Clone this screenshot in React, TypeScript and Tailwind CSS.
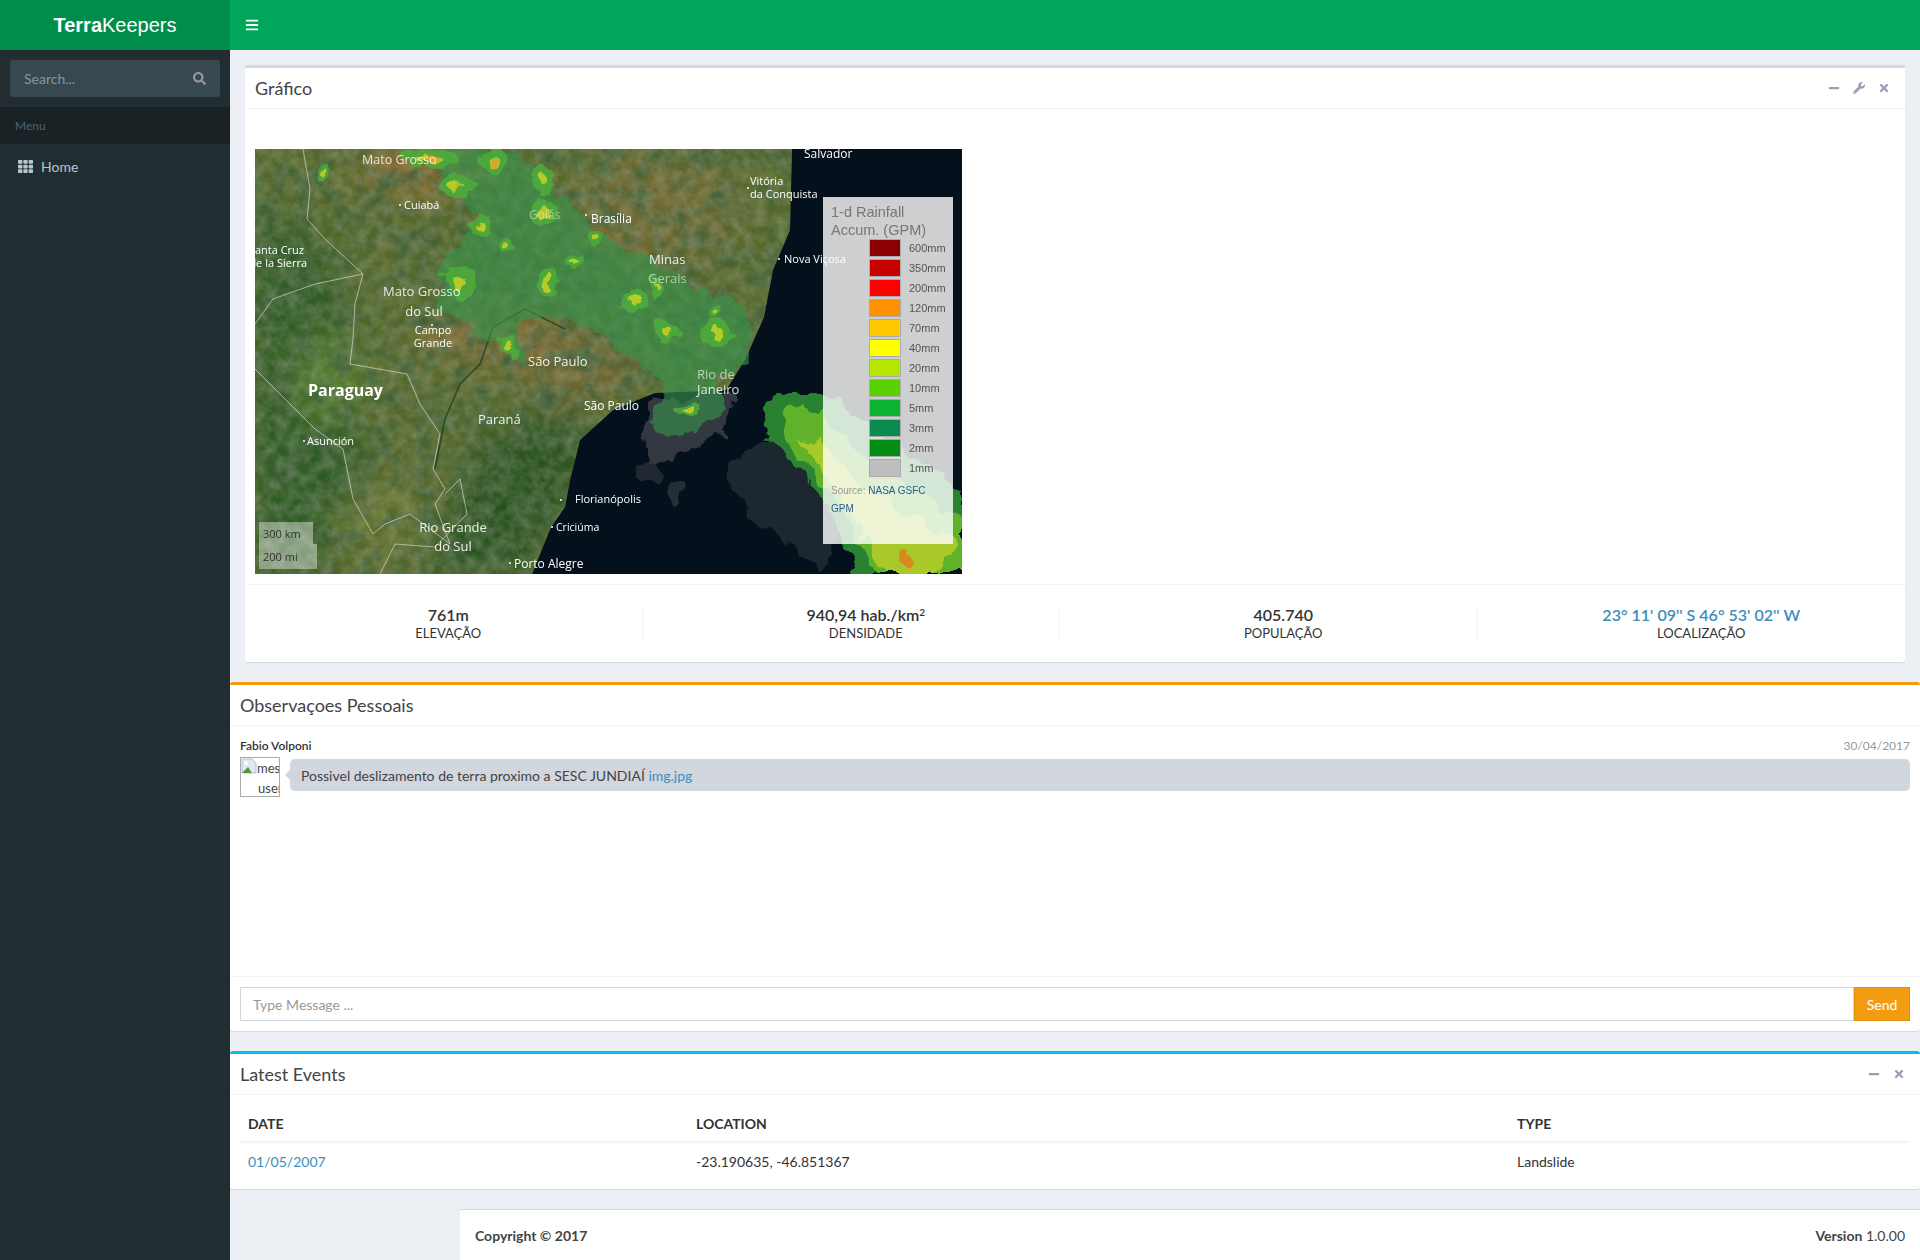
import { FaBars, FaMinus, FaSearch, FaTh, FaTimes, FaWrench } from "react-icons/fa";

const legendRows = [
    { label: "600mm", color: "bg-[#8b0000]" },
    { label: "350mm", color: "bg-[#c80000]" },
    { label: "200mm", color: "bg-[#ff0000]" },
    { label: "120mm", color: "bg-[#ff9000]" },
    { label: "70mm", color: "bg-[#ffc800]" },
    { label: "40mm", color: "bg-[#ffff00]" },
    { label: "20mm", color: "bg-[#b4e600]" },
    { label: "10mm", color: "bg-[#5ad200]" },
    { label: "5mm", color: "bg-[#0cb432]" },
    { label: "3mm", color: "bg-[#0a8c50]" },
    { label: "2mm", color: "bg-[#058c14]" },
    { label: "1mm", color: "bg-[#bebebe]" },
];

const mapLabels = [
    { t: "Mato Grosso", x: 107, y: 15, s: 12.5, o: 0.8 },
    { t: "Cuiabá", x: 149, y: 60, s: 11, o: 1 },
    { t: "Salvador", x: 549, y: 9, s: 12, o: 1 },
    { t: "Vitória", x: 495, y: 36, s: 11, o: 1 },
    { t: "da Conquista", x: 495, y: 49, s: 11, o: 1 },
    { t: "Goiás", x: 274, y: 70, s: 12, o: 0.45 },
    { t: "Brasília", x: 336, y: 74, s: 12, o: 1 },
    { t: "Santa Cruz", x: 49, y: 105, s: 11, o: 1, a: "end" },
    { t: "de la Sierra", x: 52, y: 118, s: 11, o: 1, a: "end" },
    { t: "Minas", x: 394, y: 115, s: 13, o: 0.9 },
    { t: "Gerais", x: 393, y: 134, s: 13, o: 0.55 },
    { t: "Nova Viçosa", x: 529, y: 114, s: 11, o: 1 },
    { t: "Mato Grosso", x: 128, y: 147, s: 13, o: 0.85 },
    { t: "do Sul", x: 169, y: 167, s: 13, o: 0.9, a: "middle" },
    { t: "Campo", x: 178, y: 185, s: 11, o: 1, a: "middle" },
    { t: "Grande", x: 178, y: 198, s: 11, o: 1, a: "middle" },
    { t: "São Paulo", x: 273, y: 217, s: 13, o: 0.9 },
    { t: "Rio de", x: 442, y: 230, s: 13, o: 0.6 },
    { t: "Janeiro", x: 442, y: 245, s: 13, o: 0.85 },
    { t: "Paraguay", x: 53, y: 247, s: 16, o: 1, b: true },
    { t: "São Paulo", x: 329, y: 261, s: 12, o: 1 },
    { t: "Paraná", x: 223, y: 275, s: 13, o: 0.9 },
    { t: "Asunción", x: 52, y: 296, s: 11, o: 1 },
    { t: "Florianópolis", x: 320, y: 354, s: 11, o: 1 },
    { t: "Rio Grande", x: 198, y: 383, s: 13, o: 0.9, a: "middle" },
    { t: "do Sul", x: 198, y: 402, s: 13, o: 0.9, a: "middle" },
    { t: "Criciúma", x: 301, y: 382, s: 10.5, o: 1 },
    { t: "Porto Alegre", x: 259, y: 419, s: 12, o: 1 },
];

const mapDots = [
    [145, 56], [331, 66], [524, 110], [306, 351], [297, 378], [255, 414], [493, 39], [177, 176], [49, 292],
];

// green cells with a brighter core, map coordinates
const rainCells = [
    [174, 9, 26, 10], [240, 11, 14, 14], [202, 38, 14, 14], [287, 31, 13, 16], [70, 23, 7, 8],
    [226, 78, 12, 10], [287, 64, 14, 14], [256, 96, 10, 6], [341, 89, 8, 8], [320, 113, 10, 9],
    [292, 134, 13, 10], [204, 134, 16, 16], [400, 138, 8, 10], [377, 151, 11, 10], [410, 181, 12, 8],
    [462, 184, 15, 14], [457, 161, 8, 8], [254, 197, 9, 10], [433, 258, 16, 7],
];

const coast = "537,0 535,81 518,121 509,168 490,211 471,241 400,244 358,261 325,291 315,331 310,358 296,378 277,425";

const RainfallMap = () => (
    <div className="relative w-[707px] h-[425px] overflow-hidden">
        <svg viewBox="0 0 707 425" className="block w-[707px] h-[425px]">
            <defs>
                <filter id="soft" x="-20%" y="-20%" width="140%" height="140%">
                    <feGaussianBlur stdDeviation="16" />
                </filter>
                <filter id="grain" x="0" y="0" width="100%" height="100%">
                    <feTurbulence type="fractalNoise" baseFrequency="0.09" numOctaves="5" seed="7" />
                    <feColorMatrix values="0 0 0 0 0.5  0 0 0 0 0.5  0 0 0 0 0.4  1.6 0 0 0 -0.45" />
                </filter>
                <filter id="dark" x="0" y="0" width="100%" height="100%">
                    <feTurbulence type="fractalNoise" baseFrequency="0.05" numOctaves="4" seed="3" />
                    <feColorMatrix values="0 0 0 0 0.05  0 0 0 0 0.12  0 0 0 0 0.04  0 2.2 0 0 -0.85" />
                </filter>
                <filter id="edge" x="0" y="0" width="100%" height="100%" filterUnits="objectBoundingBox">
                    <feTurbulence type="fractalNoise" baseFrequency="0.045" numOctaves="3" seed="11" />
                    <feDisplacementMap in="SourceGraphic" scale="22" xChannelSelector="R" yChannelSelector="G" />
                </filter>
                <clipPath id="land">
                    <polygon points={`0,0 ${coast} 0,425`} />
                </clipPath>
            </defs>

            {/* land */}
            <rect width="707" height="425" fill="#05101d" />
            <g clipPath="url(#land)">
                <rect width="707" height="425" fill="#56692c" />
                <g filter="url(#soft)">
                    <polygon points="0,60 70,90 100,240 110,330 60,425 0,425" fill="#2b5a22" />
                    <polygon points="240,280 320,260 330,330 270,425 170,425 200,340" fill="#28511f" />
                    <ellipse cx="170" cy="20" rx="70" ry="25" fill="#8b6a32" />
                    <ellipse cx="400" cy="60" rx="90" ry="55" fill="#6f6a30" />
                    <ellipse cx="240" cy="190" rx="80" ry="30" fill="#7f6a30" />
                    <ellipse cx="330" cy="220" rx="60" ry="30" fill="#6f6630" />
                    <ellipse cx="130" cy="370" rx="50" ry="35" fill="#66752f" />
                    <ellipse cx="70" cy="230" rx="35" ry="45" fill="#4d7a2c" />
                </g>
                <rect width="707" height="425" filter="url(#dark)" />
                <rect width="707" height="425" filter="url(#grain)" opacity="0.35" />
            </g>

            {/* borders and rivers */}
            <g fill="none" stroke="#e8e8e0" strokeWidth="0.8" opacity="0.75">
                <polyline points="48,0 55,40 52,70 70,90 108,125 100,155 98,190 95,215 152,225 165,255 185,285 178,320 190,340 180,355 195,395 155,365 130,375 118,385 98,350 88,300 60,280 0,220" />
                <polyline points="108,125 60,135 18,150 0,175" />
                <polyline points="190,345 205,330 212,365 180,398 140,395 125,425" />
            </g>
            <g fill="none" stroke="#23401f" strokeWidth="1.6" opacity="0.8">
                <polyline points="238,178 225,215 205,235 190,270 180,320" />
                <polyline points="238,178 270,160 310,180" />
            </g>

            {/* cloud shadow on the sea */}
            <g filter="url(#edge)" fill="#3c4148" opacity="0.85">
                <polygon points="395,250 480,240 470,285 440,300 395,320 385,280" />
                <polygon points="510,290 590,340 570,425 510,380 470,330 495,300" opacity="0.55" />
                <ellipse cx="395" cy="325" rx="14" ry="8" opacity="0.6" />
                <ellipse cx="420" cy="345" rx="6" ry="14" opacity="0.7" />
            </g>

            {/* rain accumulation */}
            <g filter="url(#edge)">
                <polygon points="180,0 262,0 300,40 352,90 430,130 492,160 497,210 462,235 472,262 430,288 392,272 410,240 380,210 320,172 262,172 272,218 240,192 180,160 190,110 230,70 190,40" fill="#36934a" opacity="0.62" />
                <polygon points="518,245 565,245 622,281 707,340 707,425 598,425 570,348 504,281" fill="#2c8f35" opacity="0.9" />
                <polygon points="530,262 562,262 612,310 707,370 707,425 622,425 584,350 525,290" fill="#62b42c" opacity="0.95" />
                <polygon points="545,290 565,292 610,340 700,392 680,425 630,425 595,360" fill="#a9c92c" />
                <g fill="#4ead3a" opacity="0.85">
                    {rainCells.map(([cx, cy, rx, ry]) => (
                        <ellipse key={`${cx}-${cy}`} cx={cx} cy={cy} rx={rx} ry={ry} />
                    ))}
                </g>
                <g fill="#b5cb2b">
                    {rainCells.map(([cx, cy, rx, ry]) => (
                        <ellipse key={`${cx}-${cy}`} cx={cx} cy={cy} rx={rx * 0.42} ry={ry * 0.42} />
                    ))}
                </g>
                <ellipse cx="650" cy="408" rx="8" ry="7" fill="#d98a1e" />
                <ellipse cx="176" cy="9" rx="7" ry="4" fill="#d6a62a" />
                <ellipse cx="240" cy="11" rx="4" ry="5" fill="#d6a62a" />
            </g>

            {/* labels */}
            {mapDots.map(([x, y]) => (
                <circle key={`${x}-${y}`} cx={x} cy={y} r="1" fill="#fff" />
            ))}
            {mapLabels.map((l) => (
                <text
                    key={`${l.t}-${l.y}`}
                    x={l.x}
                    y={l.y}
                    fontSize={l.s}
                    fontWeight={l.b ? 700 : 500}
                    textAnchor={l.a ?? "start"}
                    opacity={l.o}
                    className="fill-white font-['Open_Sans',sans-serif]"
                >
                    {l.t}
                </text>
            ))}
        </svg>

        {/* map scale */}
        <div className="absolute left-[4px] top-[373px] w-[54px] h-[22px] bg-white/40 pl-[4px] text-[11px] leading-[23px] text-[#333] font-['Open_Sans',sans-serif]">300 km</div>
        <div className="absolute left-[4px] top-[395px] w-[58px] h-[25px] bg-white/40 pl-[4px] text-[11px] leading-[26px] text-[#333] font-['Open_Sans',sans-serif]">200 mi</div>

        {/* legend */}
        <div className="absolute left-[568px] top-[48px] w-[130px] h-[347px] bg-white/80 pl-[8px] pt-[6px] font-['Liberation_Sans',sans-serif]">
            <div className="text-[14.5px] leading-[18px] text-[#777]">1-d Rainfall<br />Accum. (GPM)</div>
            <div className="mt-[-1px]">
                {legendRows.map((r) => (
                    <div key={r.label} className="flex items-center h-[20px] pl-[38px]">
                        <span className={`w-[32px] h-[18px] border border-[#aaa] ${r.color}`} />
                        <span className="ml-[8px] text-[11px] text-[#555]">{r.label}</span>
                    </div>
                ))}
            </div>
            <div className="mt-[4px] text-[10px] leading-[18px] text-[#999]">
                Source: <span className="text-[#2a5f8a]">NASA GSFC</span><br />
                <span className="text-[#2a5f8a]">GPM</span>
            </div>
        </div>
    </div>
);

const Stat = ({ value, label, last, link }: { value: React.ReactNode; label: string; last?: boolean; link?: boolean }) => (
    <div className="px-[15px]">
        <div className={`h-[37px] flex flex-col items-center ${last ? "" : "border-r border-[#f4f4f4]"}`}>
            <div className={`text-[16px] leading-[19px] font-semibold ${link ? "text-[#3c8dbc]" : "text-[#333]"}`}>{value}</div>
            <div className="text-[13px] leading-[18px] text-[#333]">{label}</div>
        </div>
    </div>
);

export default function App() {
    return (
        <div className="w-[1920px] h-[1260px] flex flex-col overflow-hidden bg-[#ecf0f5] text-[14px] text-[#333] font-['Lato',sans-serif]">
            {/* Header */}
            <header className="flex h-[50px] shrink-0 bg-[#00a65a]">
                <div className="w-[230px] flex items-center justify-center bg-[#008d4c] text-white text-[20px] font-['Liberation_Sans',sans-serif]">
                    <b>Terra</b>Keepers
                </div>
                <div className="flex items-center pl-[15px] text-white">
                    <FaBars className="w-[14px] h-[14px]" />
                </div>
            </header>

            <div className="flex flex-1 min-h-0">
                {/* Sidebar */}
                <aside className="w-[230px] shrink-0 bg-[#222d32]">
                    <div className="p-[10px]">
                        <div className="flex items-center h-[37px] rounded-[3px] bg-[#374850] pl-[14px] pr-[14px]">
                            <span className="flex-1 text-[#8b9599]">Search...</span>
                            <FaSearch className="w-[13px] h-[13px] text-[#999]" />
                        </div>
                    </div>
                    <div className="h-[37px] flex items-center px-[15px] bg-[#1a2226] text-[12px] text-[#4b646f]">Menu</div>
                    <div className="flex items-center h-[44px] pl-[18px] text-[#b8c7ce]">
                        <FaTh className="w-[15px] h-[15px]" />
                        <span className="ml-[8px]">Home</span>
                    </div>
                </aside>

                {/* Content */}
                <main className="flex-1 min-w-0 flex flex-col pt-[15px]">
                    {/* Gráfico */}
                    <section className="mx-[15px] h-[597px] bg-white rounded-[3px] border-t-[3px] border-[#d2d6de] shadow-[0_1px_1px_rgba(0,0,0,0.1)]">
                        <div className="flex items-center h-[41px] pl-[10px] pr-[15px] border-b border-[#f4f4f4]">
                            <h3 className="flex-1 text-[18px] text-[#444]">Gráfico</h3>
                            <div className="flex items-center gap-[13px] text-[#97a0b3]">
                                <FaMinus className="w-[12px] h-[12px]" />
                                <FaWrench className="w-[12px] h-[12px]" />
                                <FaTimes className="w-[12px] h-[12px]" />
                            </div>
                        </div>
                        <div className="pt-[40px] pl-[10px] pb-[10px]">
                            <RainfallMap />
                        </div>
                        <div className="border-t border-[#f4f4f4] pt-[20px] px-[10px]">
                            <div className="grid grid-cols-4 mx-[-15px]">
                                <Stat value="761m" label="ELEVAÇÃO" />
                                <Stat value={<>940,94 hab./km<sup className="text-[10px]">2</sup></>} label="DENSIDADE" />
                                <Stat value="405.740" label="POPULAÇÃO" />
                                <Stat value={"23° 11' 09'' S 46° 53' 02'' W"} label="LOCALIZAÇÃO" last link />
                            </div>
                        </div>
                    </section>

                    {/* Observações */}
                    <section className="mt-[20px] h-[349px] flex flex-col bg-white rounded-[3px] border-t-[3px] border-[#f39c12] shadow-[0_1px_1px_rgba(0,0,0,0.1)]">
                        <div className="flex items-center h-[41px] px-[10px] border-b border-[#f4f4f4]">
                            <h3 className="text-[18px] text-[#444]">Observaçoes Pessoais</h3>
                        </div>
                        <div className="flex-1 px-[10px] pt-[10px]">
                            <div className="flex justify-between h-[20px] items-center text-[12px]">
                                <b className="font-semibold">Fabio Volponi</b>
                                <span className="text-[#999]">30/04/2017</span>
                            </div>
                            <div className="relative mt-[1px] flex">
                                <div className="w-[40px] h-[40px] shrink-0 border border-[#aaa] overflow-hidden text-[13px] leading-[20px] text-[#444]">
                                    <div className="flex whitespace-nowrap">
                                        <svg viewBox="0 0 16 16" className="w-[16px] h-[16px] shrink-0">
                                            <path d="M1 1h10l4 4v10H1z" fill="#dfe8f5" stroke="#aab" strokeWidth="0.7" />
                                            <path d="M1 15l6-6 4 6z" fill="#4f9a3a" />
                                            <circle cx="5" cy="5" r="2" fill="#fff" />
                                        </svg>
                                        <span>message</span>
                                    </div>
                                    <div className="pl-[17px]">user</div>
                                </div>
                                <div className="relative ml-[10px] mt-[2px] flex-1 h-[32px] flex items-center rounded-[5px] bg-[#d2d6de] pl-[11px] text-[#444]">
                                    <span className="absolute left-[-5px] top-[11px] border-y-[5px] border-r-[5px] border-y-transparent border-r-[#d2d6de]" />
                                    Possivel deslizamento de terra proximo a SESC JUNDIAÍ&nbsp;<span className="text-[#3c8dbc]">img.jpg</span>
                                </div>
                            </div>
                        </div>
                        <div className="flex h-[55px] px-[10px] pt-[10px] border-t border-[#f4f4f4]">
                            <input
                                readOnly
                                placeholder="Type Message ..."
                                className="flex-1 h-[34px] border border-[#d2d6de] px-[12px] outline-none placeholder:text-[#999]"
                            />
                            <div className="w-[56px] h-[34px] flex items-center justify-center bg-[#f39c12] border border-[#e08e0b] text-white">Send</div>
                        </div>
                    </section>

                    {/* Latest Events */}
                    <section className="mt-[20px] h-[138px] bg-white rounded-[3px] border-t-[3px] border-[#00c0ef] shadow-[0_1px_1px_rgba(0,0,0,0.1)]">
                        <div className="flex items-center h-[41px] px-[10px] pr-[15px] border-b border-[#f4f4f4]">
                            <h3 className="flex-1 text-[18px] text-[#444]">Latest Events</h3>
                            <div className="flex items-center gap-[13px] text-[#97a0b3]">
                                <FaMinus className="w-[12px] h-[12px]" />
                                <FaTimes className="w-[12px] h-[12px]" />
                            </div>
                        </div>
                        <div className="px-[10px] pt-[10px]">
                            <table className="w-full table-fixed">
                                <thead>
                                    <tr className="border-b-2 border-[#f4f4f4] text-left">
                                        <th className="w-[448px] h-[37px] px-[8px] font-bold">DATE</th>
                                        <th className="w-[821px] px-[8px] font-bold">LOCATION</th>
                                        <th className="px-[8px] font-bold">TYPE</th>
                                    </tr>
                                </thead>
                                <tbody>
                                    <tr>
                                        <td className="h-[37px] px-[8px] text-[#3c8dbc]">01/05/2007</td>
                                        <td className="px-[8px]">-23.190635, -46.851367</td>
                                        <td className="px-[8px]">Landslide</td>
                                    </tr>
                                </tbody>
                            </table>
                        </div>
                    </section>

                    {/* Footer */}
                    <footer className="mt-[20px] flex-1 ml-[230px] flex items-center justify-between bg-white border-t border-[#d2d6de] px-[15px] text-[#444]">
                        <b>Copyright © 2017</b>
                        <span><b>Version</b> 1.0.00</span>
                    </footer>
                </main>
            </div>
        </div>
    );
}
